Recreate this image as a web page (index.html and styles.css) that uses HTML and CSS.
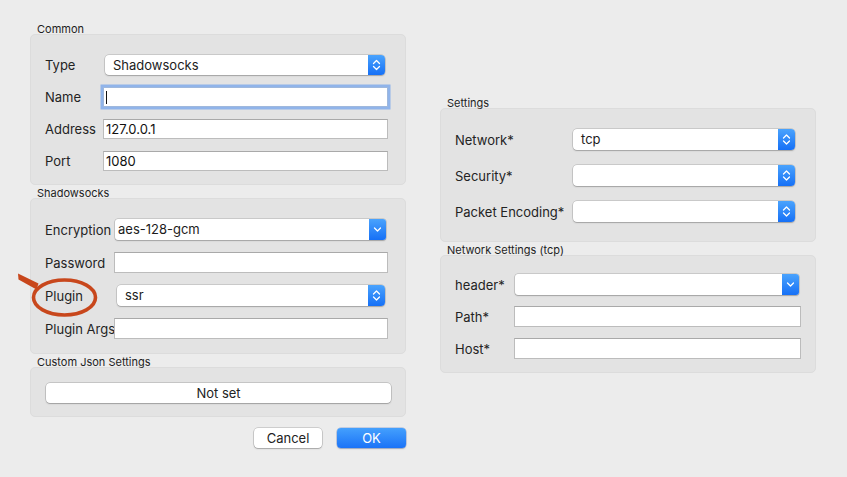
FILE: index.html
```html
<!DOCTYPE html>
<html>
<head>
<meta charset="utf-8">
<link rel="stylesheet" href="styles.css">
</head>
<body>
<div class="window">
  <div class="col col-left">
    <section class="group">
      <div class="group-title">Common</div>
      <div class="group-box box-common">
        <div class="row">
          <label class="lbl">Type</label>
          <div class="cell"><div class="popup"><span class="value">Shadowsocks</span><span class="arrow"><svg width="17" height="20" viewBox="0 0 17 20"><path d="M5.5 8.5 L8.5 5.5 L11.5 8.5 M5.5 11.5 L8.5 14.5 L11.5 11.5" fill="none" stroke="#fff" stroke-width="1.3" stroke-linecap="round" stroke-linejoin="round"/></svg></span></div></div>
        </div>
        <div class="row">
          <label class="lbl">Name</label>
          <div class="cell"><div class="field focused"><span class="caret"></span></div></div>
        </div>
        <div class="row">
          <label class="lbl">Address</label>
          <div class="cell"><div class="field">127.0.0.1</div></div>
        </div>
        <div class="row">
          <label class="lbl">Port</label>
          <div class="cell"><div class="field">1080</div></div>
        </div>
      </div>
    </section>

    <section class="group">
      <div class="group-title">Shadowsocks</div>
      <div class="group-box box-ss">
        <div class="row">
          <label class="lbl">Encryption</label>
          <div class="cell"><div class="pulldown"><span class="value">aes-128-gcm</span><span class="arrow"><svg width="17" height="21" viewBox="0 0 17 21"><path d="M5.5 9 L8.5 12 L11.5 9" fill="none" stroke="#fff" stroke-width="1.3" stroke-linecap="round" stroke-linejoin="round"/></svg></span></div></div>
        </div>
        <div class="row">
          <label class="lbl">Password</label>
          <div class="cell"><div class="field"></div></div>
        </div>
        <div class="row">
          <label class="lbl">Plugin</label>
          <div class="cell"><div class="popup popup-wide"><span class="value">ssr</span><span class="arrow"><svg width="17" height="21" viewBox="0 0 17 21"><path d="M5.5 9 L8.5 6 L11.5 9 M5.5 12 L8.5 15 L11.5 12" fill="none" stroke="#fff" stroke-width="1.3" stroke-linecap="round" stroke-linejoin="round"/></svg></span></div></div>
        </div>
        <div class="row">
          <label class="lbl">Plugin Args</label>
          <div class="cell"><div class="field"></div></div>
        </div>
      </div>
    </section>

    <section class="group">
      <div class="group-title">Custom Json Settings</div>
      <div class="group-box box-json">
        <button class="btn btn-wide">Not set</button>
      </div>
    </section>

    <div class="actions">
      <button class="btn btn-cancel">Cancel</button>
      <button class="btn btn-ok">OK</button>
    </div>
  </div>

  <div class="col col-right">
    <section class="group">
      <div class="group-title">Settings</div>
      <div class="group-box box-settings">
        <div class="row">
          <label class="lbl">Network*</label>
          <div class="cell"><div class="popup"><span class="value">tcp</span><span class="arrow"><svg width="17" height="21" viewBox="0 0 17 21"><path d="M5.5 9 L8.5 6 L11.5 9 M5.5 12 L8.5 15 L11.5 12" fill="none" stroke="#fff" stroke-width="1.3" stroke-linecap="round" stroke-linejoin="round"/></svg></span></div></div>
        </div>
        <div class="row">
          <label class="lbl">Security*</label>
          <div class="cell"><div class="popup"><span class="value"></span><span class="arrow"><svg width="17" height="21" viewBox="0 0 17 21"><path d="M5.5 9 L8.5 6 L11.5 9 M5.5 12 L8.5 15 L11.5 12" fill="none" stroke="#fff" stroke-width="1.3" stroke-linecap="round" stroke-linejoin="round"/></svg></span></div></div>
        </div>
        <div class="row">
          <label class="lbl">Packet Encoding*</label>
          <div class="cell"><div class="popup"><span class="value"></span><span class="arrow"><svg width="17" height="21" viewBox="0 0 17 21"><path d="M5.5 9 L8.5 6 L11.5 9 M5.5 12 L8.5 15 L11.5 12" fill="none" stroke="#fff" stroke-width="1.3" stroke-linecap="round" stroke-linejoin="round"/></svg></span></div></div>
        </div>
      </div>
    </section>

    <section class="group">
      <div class="group-title">Network Settings (tcp)</div>
      <div class="group-box box-net">
        <div class="row">
          <label class="lbl">header*</label>
          <div class="cell"><div class="pulldown"><span class="value"></span><span class="arrow"><svg width="17" height="21" viewBox="0 0 17 21"><path d="M5.5 9 L8.5 12 L11.5 9" fill="none" stroke="#fff" stroke-width="1.3" stroke-linecap="round" stroke-linejoin="round"/></svg></span></div></div>
        </div>
        <div class="row">
          <label class="lbl">Path*</label>
          <div class="cell"><div class="field"></div></div>
        </div>
        <div class="row">
          <label class="lbl">Host*</label>
          <div class="cell"><div class="field"></div></div>
        </div>
      </div>
    </section>
  </div>

  <svg class="annotation" width="847" height="477" viewBox="0 0 847 477">
    <polygon points="18,273.5 18.5,279.5 36.5,289.5 38.5,283.5" fill="#c8471c"/>
    <ellipse cx="64.5" cy="297.5" rx="31" ry="17.5" fill="none" stroke="#c8471c" stroke-width="3.6"/>
  </svg>
</div>
</body>
</html>
```

FILE: styles.css
```css
html, body {
  margin: 0;
  padding: 0;
  background: #ececec;
}

body {
  font-family: Inter, "Noto Sans", "Liberation Sans", sans-serif;
  font-size: 13px;
  color: #222;
}

.window {
  position: relative;
  width: 847px;
  height: 477px;
  box-sizing: border-box;
  padding: 21px 0 0 30px;
  display: flex;
  gap: 34px;
}

.col {
  width: 376px;
  display: flex;
  flex-direction: column;
}

.col-right {
  padding-top: 74px;
}

.group-title {
  font-size: 11px;
  line-height: 16px;
  height: 13px;
  padding-left: 7px;
  color: #1e1e1e;
}

.group-box {
  background: #e3e3e3;
  border: 1px solid #dcdcdc;
  border-radius: 5px;
  box-sizing: border-box;
  display: flex;
  flex-direction: column;
}

.box-common {
  height: 151px;
  padding: 20px 17px 0 14px;
  gap: 12px;
}
.box-common .lbl { width: 58px; }

.box-ss {
  height: 156px;
  padding: 20px 17px 0 14px;
  gap: 12px;
}
.box-ss .row { height: 21px; }
.box-ss .lbl { width: 69px; }

.box-json {
  height: 50px;
  padding: 15px 14px 0 15px;
}

.box-settings {
  height: 134px;
  padding: 20px 17px 0 14px;
  gap: 15px;
}
.box-settings .row { height: 21px; }
.box-settings .lbl { width: 116px; }

.box-net {
  height: 118px;
  padding: 18px 14px 0 14px;
  gap: 11px;
}
.box-net .row { height: 21px; }
.box-net .lbl { width: 59px; }

.row {
  display: flex;
  align-items: center;
  height: 20px;
}

.lbl {
  flex: none;
  white-space: nowrap;
  color: #232323;
  line-height: 16px;
}

.cell {
  flex: 1;
  height: 100%;
  display: flex;
}

.field {
  flex: 1;
  background: #fff;
  border: 1px solid #bcbcbc;
  border-top-color: #a9a9a9;
  box-sizing: border-box;
  padding: 0 2px;
  line-height: 18px;
  font-size: 13px;
  color: #111;
  display: flex;
  align-items: center;
}

.field.focused {
  border-color: #9fb8dc;
  box-shadow: 0 0 0 2.5px #90b4ea;
}

.caret {
  width: 1px;
  height: 13px;
  background: #111;
}

.popup, .pulldown {
  flex: 1;
  display: flex;
  background: #fff;
  border-radius: 4px;
  box-shadow: 0 0 0 0.5px rgba(0, 0, 0, 0.22), 0 1px 1.5px rgba(0, 0, 0, 0.2);
  overflow: hidden;
}

.popup {
  margin: 0 3px 0 2px;
}

.popup-wide {
  margin: 0 3px 0 3px;
}

.pulldown {
  margin: 0 2px 0 1px;
  border-radius: 3px;
}

.value {
  flex: 1;
  padding-left: 8px;
  line-height: 20px;
  color: #1c1c1c;
}

.pulldown .value {
  padding-left: 3px;
}

.arrow {
  flex: none;
  width: 17px;
  background: linear-gradient(#4aa3fd, #1670f6);
  display: flex;
  align-items: center;
  justify-content: center;
}

.arrow svg {
  display: block;
}

.btn {
  font-family: inherit;
  font-size: 13px;
  color: #222;
  background: #fff;
  border: none;
  border-radius: 4px;
  box-shadow: 0 0 0 0.5px rgba(0, 0, 0, 0.25), 0 1px 1.5px rgba(0, 0, 0, 0.2);
  height: 20px;
  padding: 0;
  line-height: 20px;
  cursor: default;
}

.btn-wide {
  width: 345px;
}

.actions {
  display: flex;
  justify-content: flex-end;
  gap: 15px;
  margin-top: 11px;
}

.btn-cancel {
  width: 68px;
}

.btn-ok {
  width: 69px;
  color: #fff;
  background: linear-gradient(#44a0fd, #1b73f7);
  box-shadow: 0 0 0 0.5px rgba(0, 60, 180, 0.35), 0 1px 1.5px rgba(0, 0, 0, 0.2);
}

.annotation {
  position: absolute;
  left: 0;
  top: 0;
  pointer-events: none;
}
```
